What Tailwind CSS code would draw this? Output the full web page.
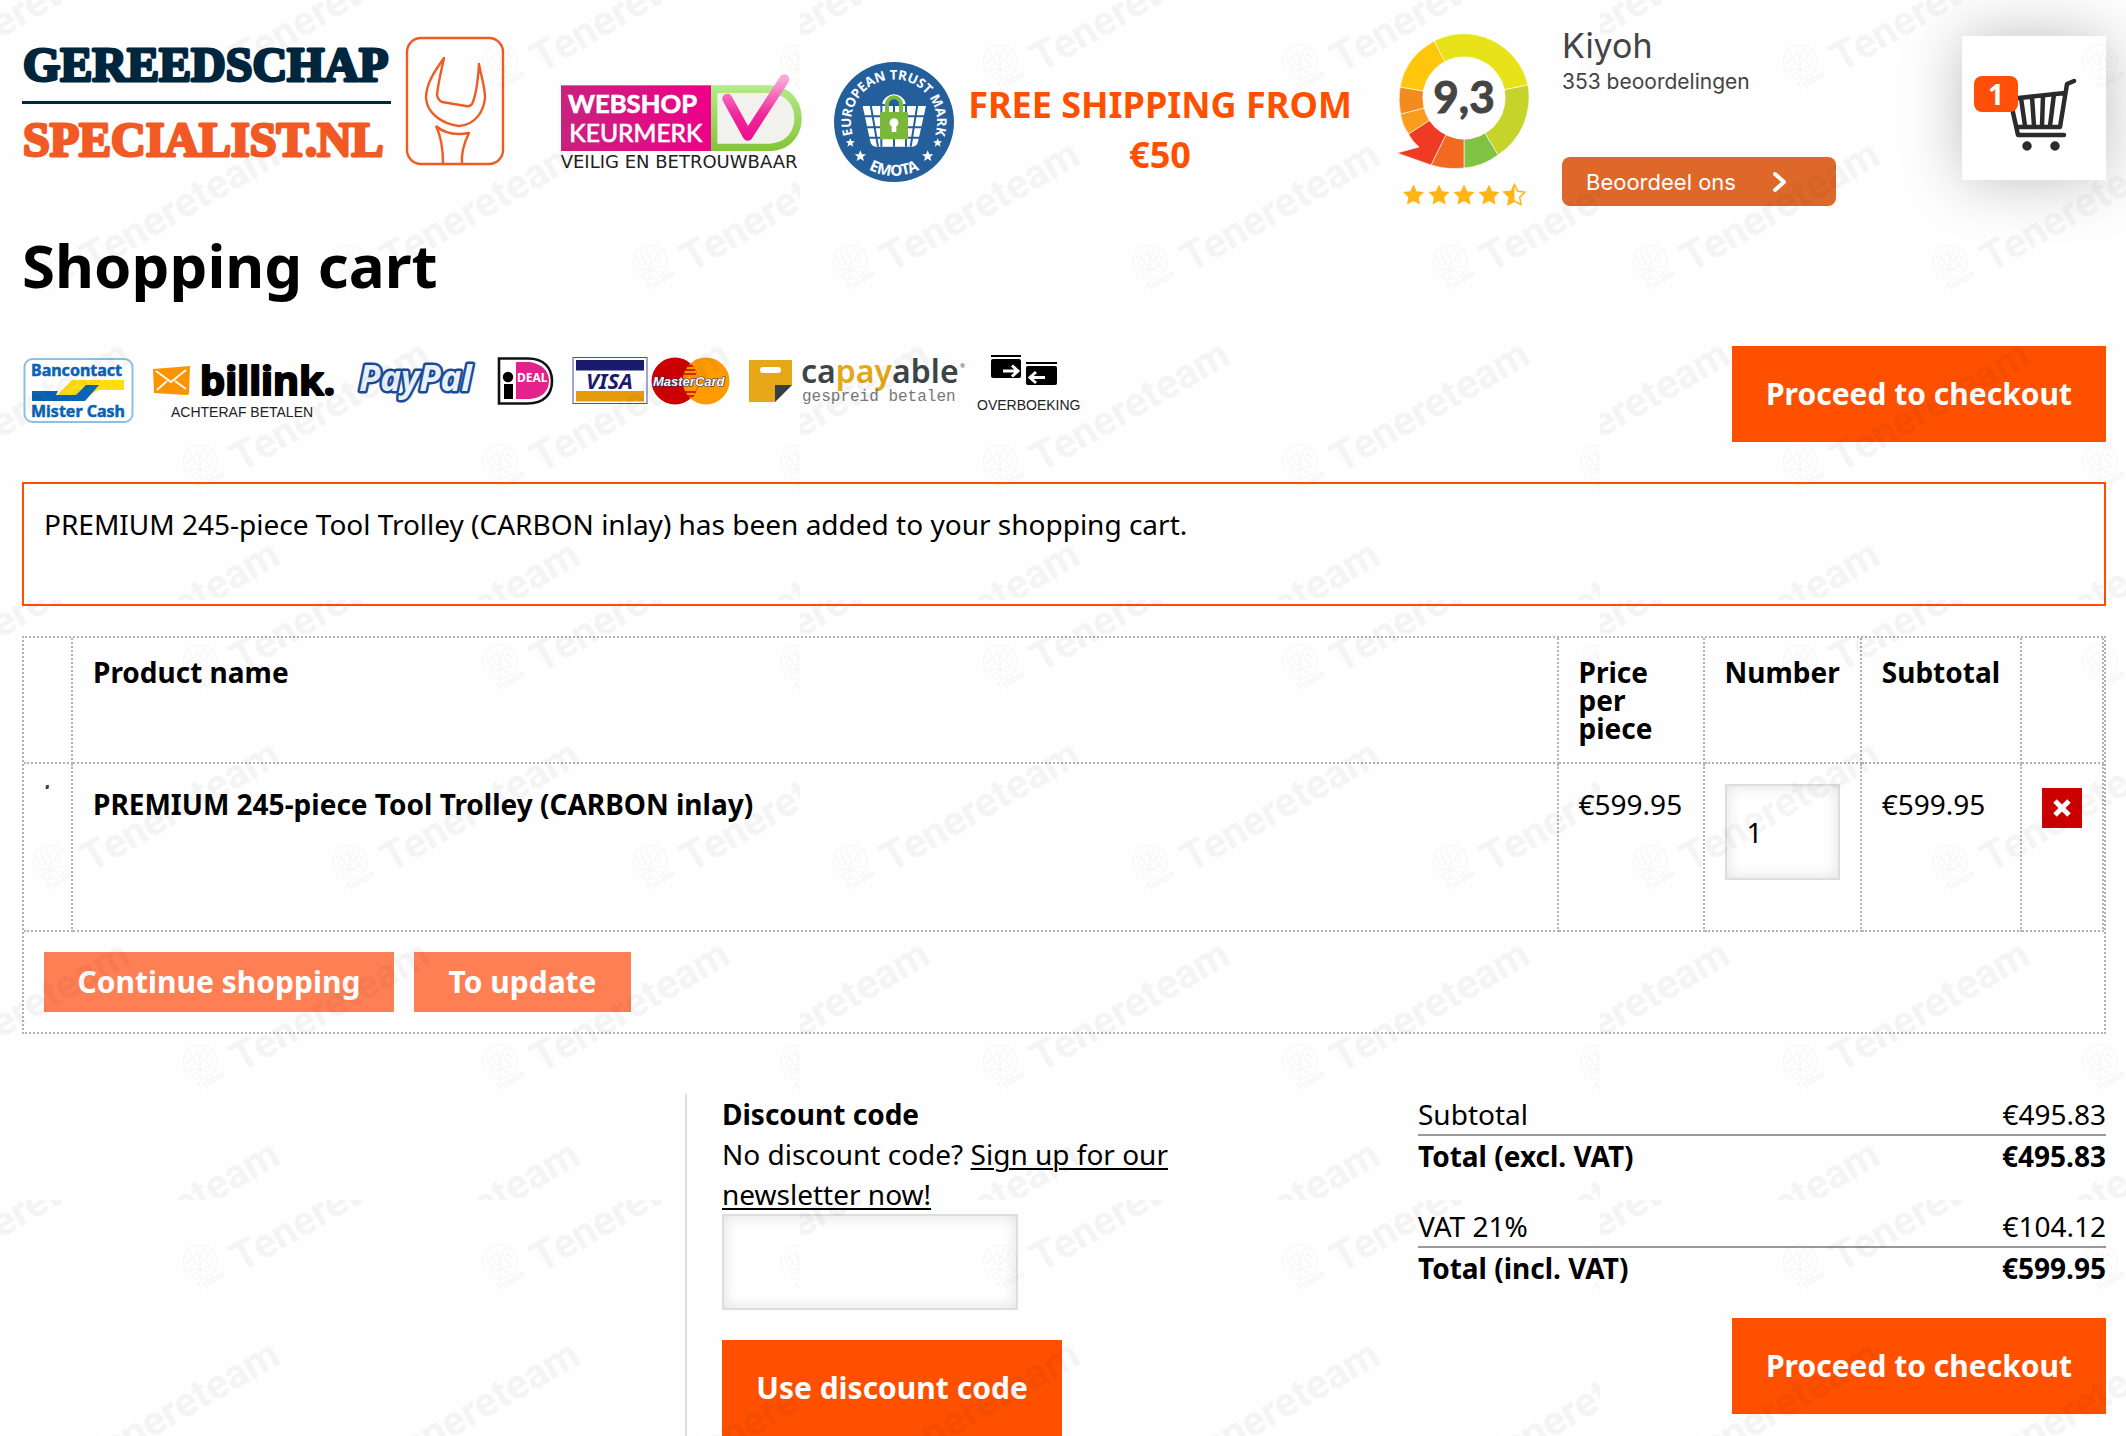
<!DOCTYPE html>
<html lang="en">
<head>
<meta charset="utf-8">
<title>Shopping cart</title>
<script src="https://cdn.jsdelivr.net/npm/@tailwindcss/browser@4"></script>
</head>
<body class="relative bg-[#fefefe] font-['Noto_Sans',sans-serif] text-[28px] leading-10 text-black">
<div class="pl-[22px] pr-5">

<header class="flex items-start pt-8">
  <a href="#" aria-label="Gereedschapspecialist.nl" class="mt-1 shrink-0">
    <svg width="484" height="134" viewBox="22 36 484 134" class="block">
      <g font-family="'Liberation Serif',serif" font-weight="700" font-size="48" stroke-width="3" stroke-linejoin="round">
        <text x="23" y="81" fill="#00263e" stroke="#00263e">GEREEDSCHAP</text>
        <text x="23" y="156" fill="#f15a24" stroke="#f15a24">SPECIALIST.NL</text>
      </g>
      <rect x="22" y="101" width="369" height="3" fill="#00263e"/>
      <g fill="none" stroke="#f15a24" stroke-width="2.4" stroke-linejoin="round">
        <rect x="407" y="38" width="96" height="126" rx="14"/>
        <path d="M444 58C434 72 426 84 426 98C427 114 443 124 459 126C476 125 484 110 485 98C485 86 481 76 479 64C478 80 476 96 472 104Q470 107 466 106L442 102Q438 100 437 95C438 84 441 72 444 58Z"/>
        <path d="M436 126C446 135 458 135 469 133C464 143 461 152 462 164M436 126C442 138 443 150 443 164"/>
      </g>
    </svg>
  </a>

  <a href="#" aria-label="Webshop Keurmerk" class="ml-[54px] mt-10 shrink-0">
    <svg width="244" height="98" viewBox="60 94 732 294" class="block">
      <defs>
        <linearGradient id="wk" x1="0" x2="1"><stop offset="0" stop-color="#c9227f"/><stop offset="1" stop-color="#ee0088"/></linearGradient>
        <linearGradient id="gr" x1="0" x2="0" y1="0" y2="1"><stop offset="0" stop-color="#b4ec8a"/><stop offset="1" stop-color="#84c435"/></linearGradient>
        <linearGradient id="ck" x1="0" x2="0" y1="0" y2="1"><stop offset="0" stop-color="#f9a8d6"/><stop offset=".6" stop-color="#ef2a9c"/><stop offset="1" stop-color="#ee1292"/></linearGradient>
      </defs>
      <rect x="63" y="134" width="452" height="197" fill="url(#wk)"/>
      <path d="M513 134H695C750 138 785 180 785 233S750 328 695 331H513Z" fill="url(#gr)"/>
      <path d="M532 157H690C735 160 763 190 763 233S735 306 690 309H532Z" fill="#f1f2ee"/>
      <path d="M562 174L623 285L733 116" fill="none" stroke="url(#ck)" stroke-width="30" stroke-linecap="round" stroke-linejoin="round"/>
      <text x="84" y="218" font-family="Lato,sans-serif" font-weight="700" font-size="77" fill="#fff" stroke="#fff" stroke-width="2">WEBSHOP</text>
      <text x="88" y="303" font-family="Lato,sans-serif" font-size="74" fill="#fff" stroke="#fff" stroke-width="2">KEURMERK</text>
      <text x="62" y="383" font-family="'DejaVu Sans',sans-serif" font-size="54" fill="#222">VEILIG EN BETROUWBAAR</text>
    </svg>
  </a>

  <a href="#" aria-label="European Trust Mark Emota" class="ml-[30px] mt-[30px] shrink-0">
    <svg width="120" height="120" viewBox="882 66 360 360" class="block">
      <circle cx="1062" cy="246" r="180" fill="#245f9c"/>
      <defs>
        <path id="arcTop" d="M936 275A129 129 0 1 1 1188 275"/>
        <path id="arcBot" d="M945 357A161 161 0 0 0 1179 357"/>
        <path id="st" d="M0 -17L5 -5.500L17 -5L7.500 3L11 15L0 8L-11 15L-7.500 3L-17 -5L-5 -5.500Z"/>
      </defs>
      <g fill="#fff" font-family="'Noto Sans',sans-serif" font-weight="700" text-anchor="middle">
        <text font-size="40"><textPath href="#arcTop" startOffset="50%">EUROPEAN TRUST MARK</textPath></text>
        <text font-size="46"><textPath href="#arcBot" startOffset="50%">EMOTA</textPath></text>
        <use href="#st" x="961" y="348"/><use href="#st" x="1163" y="348"/>
        <use href="#st" transform="translate(931 308) scale(.8)"/><use href="#st" transform="translate(1193 308) scale(.8)"/>
      </g>
      <path d="M968 198H1158L1134 305Q1130 320 1115 320H1010Q995 320 991 305Z" fill="#fff"/>
      <path d="M966 229H1160M972 262H1150M980 293H1145M992 195L1014 320M1024 195V320M1062 195V320M1098 195V320M1132 195L1112 320" stroke="#245f9c" stroke-width="6"/>
      <path d="M1031 192A32 32 0 0 1 1093 192" fill="none" stroke="#fff" stroke-width="10"/>
      <path d="M1041 222V193A21 21 0 0 1 1083 193V222" fill="none" stroke="#79b83b" stroke-width="12"/>
      <rect x="1020" y="216" width="84" height="82" rx="4" fill="#79b83b"/>
      <path d="M1062 235a13 13 0 0 1 7 24V276H1055V259a13 13 0 0 1 7 -24Z" fill="#fff"/>
    </svg>
  </a>

  <p class="mt-12 w-[412px] shrink-0 text-center text-[36px] leading-[50px] font-bold text-[#ff5000]">FREE SHIPPING FROM €50</p>

  <section class="ml-7 flex shrink-0 font-[Inter,sans-serif] text-[#444]" aria-label="Kiyoh">
    <svg width="140" height="176" viewBox="1394 32 140 176" class="block" role="img" aria-label="9,3">
      <g stroke="#fff" stroke-width=".6">
        <path d="M1434 41A66 67 0 0 1 1528 85L1464 98Z" fill="#e8e219"/>
        <path d="M1528 85A66 68 0 0 1 1498 155L1464 98Z" fill="#c5d32b"/>
        <path d="M1498 155A66 68 0 0 1 1464 168L1464 98Z" fill="#80c241"/>
        <path d="M1464 168Q1447 170 1431 165L1464 98Z" fill="#f26a21"/>
        <path d="M1431 165L1397 153L1419 147Q1412 141 1408.500 134L1464 98Z" fill="#ef3b24"/>
        <path d="M1408.500 134Q1402 125 1400.500 114L1464 98Z" fill="#fa9d1c"/>
        <path d="M1400.500 114Q1398 100 1400 87L1464 98Z" fill="#f48b20"/>
        <path d="M1400 87Q1405 57 1434 41L1464 98Z" fill="#ffc60b"/>
      </g>
      <circle cx="1464" cy="98" r="41.500" fill="#fefefe"/>
      <text x="1464" y="113" text-anchor="middle" font-family="Lato,sans-serif" font-weight="700" font-size="44" fill="#444" stroke="#444">9,3</text>
      <defs><path id="star" d="M0 -10.500L3.200 -3.800L10.500 -2.900L5.200 2.200L6.500 9.500L0 6L-6.500 9.500L-5.200 2.200L-10.500 -2.900L-3.200 -3.800Z"/></defs>
      <g fill="#ffb515">
        <use href="#star" x="1413.500" y="195"/><use href="#star" x="1439" y="195"/><use href="#star" x="1464" y="195"/><use href="#star" x="1489" y="195"/>
        <use href="#star" x="1514.500" y="195" fill="none" stroke="#ffb515" stroke-width="1.500"/>
        <path transform="translate(1514.500 195)" d="M0 -10.500V6L-6.500 9.500L-5.200 2.200L-10.500 -2.900L-3.200 -3.800Z"/>
      </g>
    </svg>
    <div class="ml-7 flex flex-col items-start">
      <h2 class="text-[34px] leading-7">Kiyoh</h2>
      <p class="mt-1 text-[21px] leading-9">353 beoordelingen</p>
      <a href="#" class="mt-[57px] flex h-[49px] w-[274px] items-center rounded-lg bg-[#de6829] pl-6 text-[22px] text-white">
        Beoordeel ons
        <svg width="16" height="22" viewBox="0 0 16 22" class="ml-9" fill="none" stroke="#fff" stroke-width="4" stroke-linecap="round" stroke-linejoin="round"><path d="M3 3L12 11L3 19"/></svg>
      </a>
    </div>
  </section>

  <a href="#" aria-label="Cart, 1 item" class="relative mt-1 ml-auto h-36 w-36 shrink-0 bg-white shadow-[0_0_60px_rgba(0,0,0,0.25)]">
    <svg width="144" height="144" viewBox="1962 36 144 144" class="block" fill="none" stroke="#2b2b2b" stroke-width="4.500" stroke-linecap="round" stroke-linejoin="round">
      <path d="M2074 81L2067 84L2060 127H2018M2065 93L2010 99L2018 135H2064" />
      <path d="M2021 98L2025 126M2032 97L2034 126M2043 96L2042 126M2054 94L2050 126"/>
      <circle cx="2027" cy="146" r="2.500"/><circle cx="2055" cy="146" r="2.500"/>
    </svg>
    <span class="absolute top-10 left-3 flex h-9 w-11 items-center justify-center rounded-lg bg-[#ff4f08] font-bold text-white">1</span>
  </a>
</header>

<main>
  <h1 class="mt-[27px] text-[60px] leading-[60px] font-bold">Shopping cart</h1>

  <div class="mt-[51px] flex items-start justify-between">
    <div class="mt-2 flex" role="img" aria-label="Payment methods">
      <svg width="121" height="70" viewBox="22 354 121 70">
        <rect x="24.500" y="359" width="108" height="63" rx="8" fill="#fff" stroke="#8dbfe4" stroke-width="2"/>
        <text x="31" y="376" font-weight="700" font-size="16" fill="#0a63b3" stroke="#0a63b3" stroke-width=".5">Bancontact</text>
        <text x="31" y="417" font-weight="700" font-size="16" fill="#0a63b3" stroke="#0a63b3" stroke-width=".5">Mister Cash</text>
        <path d="M57 395L72 380H124V390H98L90 395Z" fill="#ffdd15"/>
        <path d="M32 391H58L56 395H76L86 385H99L85 401H32Z" fill="#0a63b3"/>
      </svg>
      <svg width="204" height="70" viewBox="143 354 204 70">
        <path d="M153 369L190 366L189 393Q189 395 186 395L154 393Z" fill="#fb9400"/>
        <path d="M156 371L171 382L186 370M157 390L167 381M175 381L186 389" fill="none" stroke="#fff" stroke-width="1.800"/>
        <text x="200" y="395" font-weight="700" font-size="40" stroke="#000" stroke-width="2" stroke-linejoin="round">billink.</text>
        <text x="171" y="417" font-family="'Liberation Sans',sans-serif" font-size="14" fill="#222">ACHTERAF BETALEN</text>
      </svg>
      <svg width="142" height="70" viewBox="347 354 142 70">
        <text x="359" y="391" font-weight="700" font-style="italic" font-size="35" fill="#e9f2fb" stroke="#1b4b96" stroke-width="5" paint-order="stroke" stroke-linejoin="round">PayPal</text>
      </svg>
      <svg width="74" height="70" viewBox="489 354 74 70">
        <path d="M499 358.500H528C544 358.500 552 368 552 381S544 403.500 528 403.500H499Z" fill="#fff" stroke="#111" stroke-width="2.600"/>
        <path d="M516 362H530C542 364 549 371 549 381S542 398 530 399H516Z" fill="#e3238b"/>
        <circle cx="508" cy="377" r="5.200"/><rect x="504" y="384" width="9" height="15"/>
        <text x="517" y="382" font-weight="700" font-size="12" fill="#fff">DEAL</text>
      </svg>
      <svg width="87" height="70" viewBox="563 354 87 70">
        <rect x="573" y="357.500" width="74" height="46" fill="#fff" stroke="#4a4fa0"/>
        <rect x="576" y="360" width="68" height="10.500" fill="#1a1a6e"/><rect x="576" y="391" width="68" height="10.500" fill="#e59a0c"/>
        <text x="586" y="389" font-weight="700" font-style="italic" font-size="22" fill="#1a1a6e">VISA</text>
      </svg>
      <svg width="88" height="70" viewBox="650 354 88 70">
        <circle cx="706" cy="381" r="23.500" fill="#ff9a00"/><circle cx="675" cy="381" r="23.500" fill="#c00"/>
        <path d="M690.500 363.500A23.500 23.500 0 0 1 690.500 398.500A23.500 23.500 0 0 1 690.500 363.500Z" fill="#ff9a00"/>
        <path d="M688 366H693M685 370H695M684 374H696M684 392H696M687 396H694" stroke="#c00" stroke-width="1.500"/>
        <text x="653" y="386" font-family="'Liberation Sans',sans-serif" font-weight="700" font-style="italic" font-size="13" fill="#fff" stroke="#2b2d6b" stroke-width="1.200" paint-order="stroke">MasterCard</text>
      </svg>
      <svg width="233" height="70" viewBox="738 354 233 70">
        <path d="M749 360H792V385L775 402H749Z" fill="#e6a817"/><path d="M775 402V385H792Z" fill="#333f42"/>
        <rect x="760" y="367" width="21" height="6" rx="3" fill="#fff"/>
        <text x="801" y="383" font-weight="600" font-size="32" fill="#3b4547">ca<tspan fill="#e6a817">pay</tspan>able</text>
        <text x="960" y="368" font-size="6" fill="#3b4547">®</text>
        <text x="802" y="401" font-family="'Liberation Mono',monospace" font-size="16" fill="#777">gespreid betalen</text>
      </svg>
      <svg width="120" height="70" viewBox="971 354 120 70">
        <rect x="991" y="355" width="30" height="2"/><rect x="991" y="359" width="30" height="19" rx="2"/>
        <rect x="1026" y="362" width="31" height="2"/><rect x="1026" y="366" width="31" height="19" rx="2"/>
        <path d="M1003 371H1017M1012 365.500L1018 371L1012 376.500M1045 377.500H1031M1036 372L1030 377.500L1036 383" fill="none" stroke="#fff" stroke-width="3"/>
        <text x="977" y="410" font-family="'Liberation Sans',sans-serif" font-size="14" fill="#222">OVERBOEKING</text>
      </svg>
    </div>
    <button type="button" class="h-24 w-[374px] shrink-0 bg-[#ff5000] text-[30px] font-bold text-white">Proceed to checkout</button>
  </div>

  <div role="status" class="mt-10 border-2 border-[#ff5000] px-5 pt-5 pb-[60px]">PREMIUM 245-piece Tool Trolley (CARBON inlay) has been added to your shopping cart.</div>

  <table class="mt-[30px] w-full border-separate border-spacing-0 border-2 border-dotted border-[#b3b3b3] [&_td]:border-dotted [&_td]:border-[#b3b3b3] [&_td]:p-5 [&_td]:align-top [&_th]:border-r-2 [&_th]:border-b-2 [&_th]:border-dotted [&_th]:border-[#b3b3b3] [&_th]:p-5 [&_th]:text-left [&_th]:align-top">
    <thead>
      <tr class="leading-7">
        <th class="w-[49px]"></th>
        <th>Product name</th>
        <th class="w-[146px]">Price per piece</th>
        <th class="w-[157px]">Number</th>
        <th class="w-[160px]">Subtotal</th>
        <th class="w-[82px]"></th>
      </tr>
    </thead>
    <tbody>
      <tr class="[&>td]:border-r-2 [&>td]:border-b-2">
        <td><a href="#" aria-label="Product photo" class="block w-[7px]"><svg width="7" height="7" viewBox="0 0 7 7" class="block"><path d="M2 1H5L4.500 5H1.500Z" fill="#444"/></svg></a></td>
        <td><a href="#" class="font-bold">PREMIUM 245-piece Tool Trolley (CARBON inlay)</a></td>
        <td>€599.95</td>
        <td><input type="text" value="1" aria-label="Number" class="mb-[30px] block h-24 w-[115px] border-2 border-[#ddd] bg-white px-5 shadow-[inset_0_0_16px_rgba(0,0,0,0.12)]"></td>
        <td>€599.95</td>
        <td><button type="button" aria-label="Remove" class="mt-1 flex h-10 w-10 items-center justify-center bg-[#c00]"><svg width="20" height="20" viewBox="0 0 20 20" stroke="#fff" stroke-width="5"><path d="M3 3L17 17M17 3L3 17"/></svg></button></td>
      </tr>
      <tr>
        <td colspan="6">
          <div class="flex gap-5">
            <button type="button" class="h-[60px] w-[350px] bg-[#ff7f55] text-[30px] font-bold text-white">Continue shopping</button>
            <button type="button" class="h-[60px] w-[217px] bg-[#ff7f55] text-[30px] font-bold text-white">To update</button>
          </div>
        </td>
      </tr>
    </tbody>
  </table>

  <div class="mt-[60px] grid grid-cols-[663fr_733fr_688fr]">
    <div></div>
    <form class="border-l-2 border-[#ddd] pl-[35px]">
      <label for="code" class="block font-bold">Discount code</label>
      <p class="max-w-[520px]">No discount code? <a href="#" class="underline decoration-2 underline-offset-3">Sign up for our newsletter now!</a></p>
      <input id="code" type="text" class="block h-24 w-[296px] border-2 border-[#ddd] bg-white px-5 shadow-[inset_0_0_16px_rgba(0,0,0,0.12)]">
      <button type="button" class="mt-[30px] block h-24 w-[340px] bg-[#ff5000] text-[30px] font-bold text-white">Use discount code</button>
    </form>
    <section>
      <dl>
        <div class="flex justify-between border-b-2 border-[#999]"><dt>Subtotal</dt><dd>€495.83</dd></div>
        <div class="flex justify-between font-bold"><dt>Total (excl. VAT)</dt><dd>€495.83</dd></div>
        <div class="mt-[30px] flex justify-between border-b-2 border-[#999]"><dt>VAT 21%</dt><dd>€104.12</dd></div>
        <div class="flex justify-between font-bold"><dt>Total (incl. VAT)</dt><dd>€599.95</dd></div>
      </dl>
      <button type="button" class="mt-[30px] ml-auto block h-24 w-[374px] bg-[#ff5000] text-[30px] font-bold text-white">Proceed to checkout</button>
    </section>
  </div>
</main>
</div>

<!-- Repeating 800x600 watermark tile over the whole page -->
<svg class="pointer-events-none absolute inset-0 h-full w-full" aria-hidden="true">
  <defs>
    <g id="mark">
      <g fill="none" stroke="#000" stroke-width="1.500" stroke-dasharray="2 1">
        <circle r="17"/>
        <path d="M0 16V-4M0 6L-8 -4M0 2L8 -8M-8 -4L-13 2M-8 -4L-9 -11M8 -8L13 -3M0 -4L-4 -13M0 -4L5 -14M0 8L9 4L13 7M0 8L-7 7L-11 9M-12 -2L-14 -6M-5 -8L-1 -9M8 -8L8 -13M4 -3L11 2M-4 1L-11 6M3 7L8 11M-3 10L-8 13"/>
      </g>
      <text transform="translate(-1 29) rotate(-30)" font-family="Roboto,sans-serif" font-weight="700" font-size="10">Tenere</text>
      <text transform="translate(41 11) rotate(-30)" font-family="Roboto,sans-serif" font-weight="700" font-size="41">Tenereteam</text>
    </g>
    <pattern id="tile" width="800" height="600" patternUnits="userSpaceOnUse">
      <use href="#mark" x="-100" y="62"/><use href="#mark" x="200" y="62"/><use href="#mark" x="500" y="62"/><use href="#mark" x="798" y="62"/>
      <use href="#mark" x="-250" y="262"/><use href="#mark" x="50" y="262"/><use href="#mark" x="350" y="262"/><use href="#mark" x="650" y="262"/>
      <use href="#mark" x="-100" y="462"/><use href="#mark" x="200" y="462"/><use href="#mark" x="500" y="462"/><use href="#mark" x="798" y="462"/>
      <use href="#mark" x="50" y="662"/><use href="#mark" x="350" y="662"/><use href="#mark" x="650" y="662"/>
    </pattern>
  </defs>
  <rect width="100%" height="100%" fill="url(#tile)" opacity=".038"/>
</svg>
</body>
</html>
